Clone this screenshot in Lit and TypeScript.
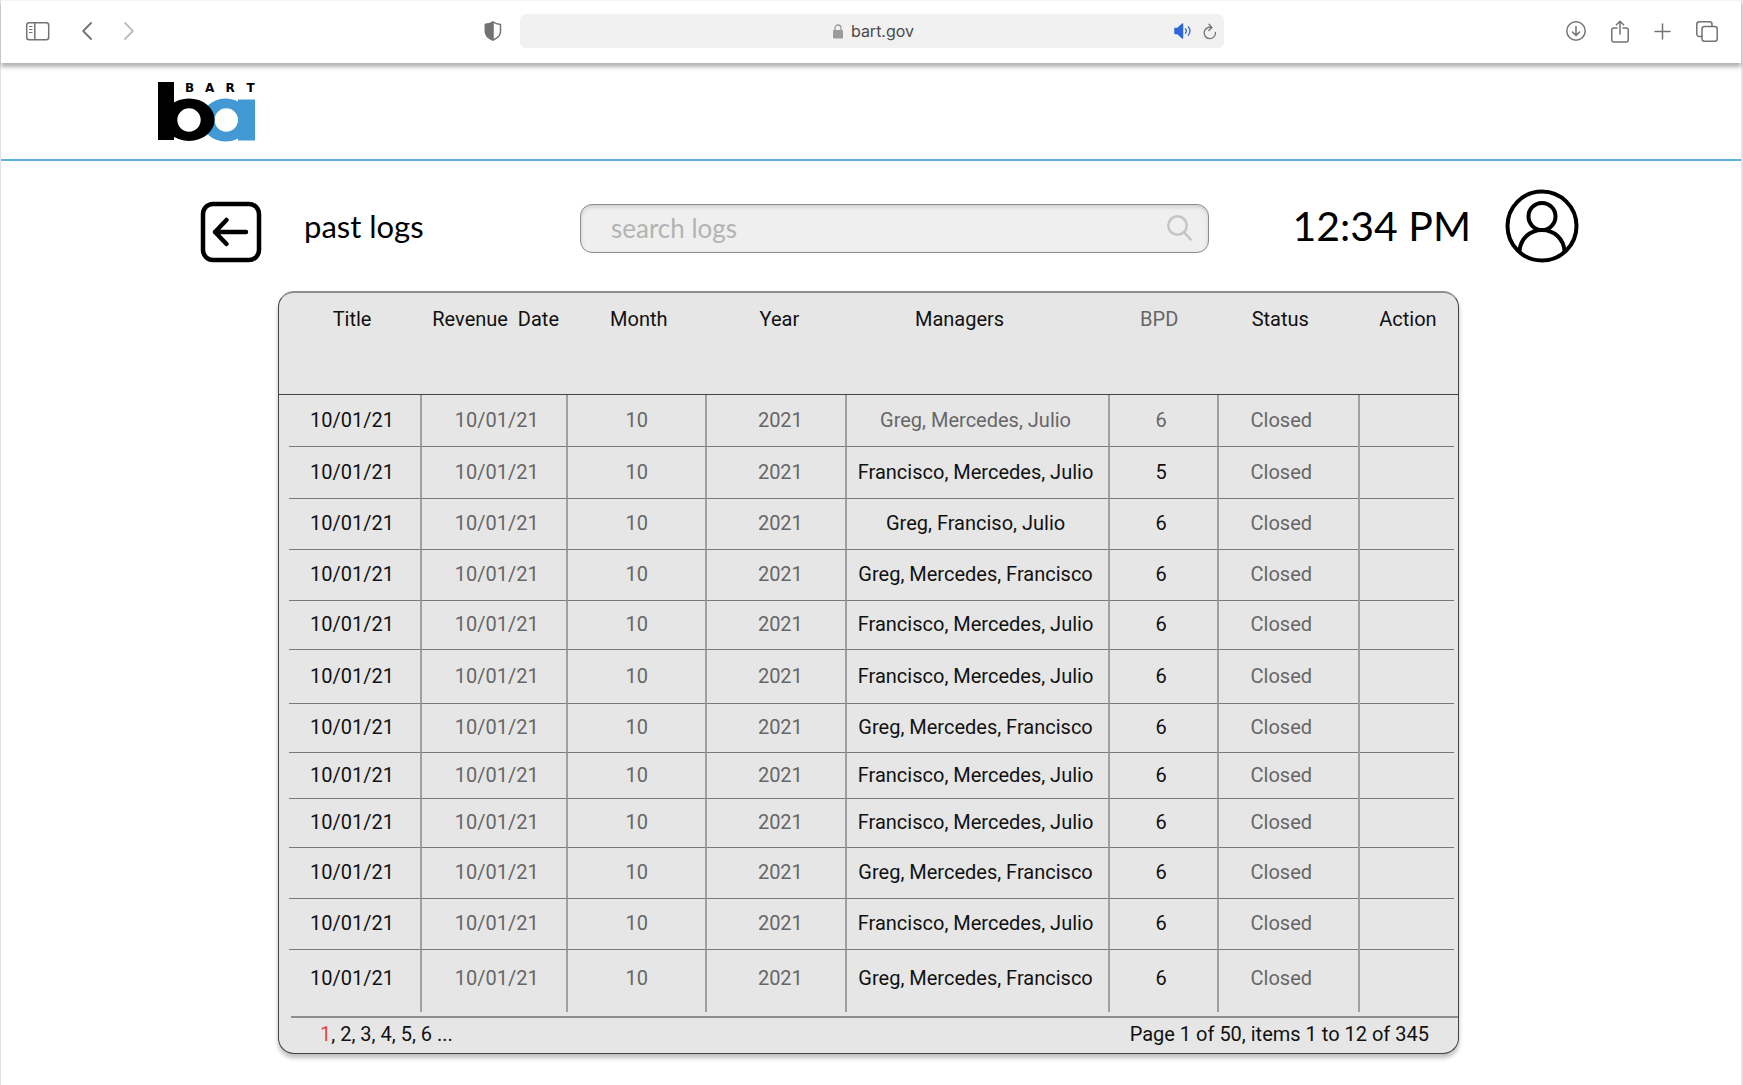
import { LitElement, html, css, svg } from "lit";
import { customElement } from "lit/decorators.js";
import { classMap } from "lit/directives/class-map.js";

interface LogRow {
  managers: string;
  bpd: number;
  muted?: boolean;
}

const FMJ = "Francisco, Mercedes, Julio";
const GMF = "Greg, Mercedes, Francisco";

const ROWS: LogRow[] = [
  { managers: "Greg, Mercedes, Julio", bpd: 6, muted: true },
  { managers: FMJ, bpd: 5 },
  { managers: "Greg, Franciso, Julio", bpd: 6 },
  { managers: GMF, bpd: 6 },
  { managers: FMJ, bpd: 6 },
  { managers: FMJ, bpd: 6 },
  { managers: GMF, bpd: 6 },
  { managers: FMJ, bpd: 6 },
  { managers: FMJ, bpd: 6 },
  { managers: GMF, bpd: 6 },
  { managers: FMJ, bpd: 6 },
  { managers: GMF, bpd: 6 },
];

const icon = (w: number, h: number, body: unknown) => html`<svg
  width=${w}
  height=${h}
  viewBox="0 0 ${w} ${h}"
  fill="none"
  stroke="currentColor"
  stroke-width="1.5"
  stroke-linecap="round"
  stroke-linejoin="round"
  aria-hidden="true"
>${body}</svg>`;

@customElement("browser-bar")
export class BrowserBar extends LitElement {
  static styles = css`
    :host {
      display: grid;
      grid-template-columns: 1fr 704px 1fr;
      align-items: center;
      height: 63px;
      box-sizing: border-box;
      padding: 0 23px 2px 24px;
      background: #fff;
      border-top: 1px solid #f4f4f4;
      box-shadow: 0 4px 4px rgba(0, 0, 0, 0.3);
      position: relative;
      font-family: Inter, "Liberation Sans", sans-serif;
      color: #737373;
    }
    button {
      display: flex;
      padding: 0;
      border: 0;
      background: none;
      color: inherit;
    }
    .group {
      display: flex;
      align-items: center;
    }
    .left {
      gap: 32px;
    }
    .right {
      justify-content: flex-end;
      gap: 25px;
    }
    .faded {
      color: #bdbdbd;
    }
    .shield {
      margin-left: auto;
      margin-right: 18px;
    }
    .address {
      display: flex;
      align-items: center;
      height: 34px;
      border-radius: 6px;
      background: #f1f1f1;
      padding: 0 7px;
      gap: 11px;
    }
    .site {
      flex: 1;
      display: flex;
      justify-content: center;
      align-items: center;
      gap: 8px;
      padding-left: 58px;
      font-size: 16px;
      color: #4a4a4a;
    }
    .sound {
      color: #2f66da;
    }
  `;

  render() {
    return html`
      <div class="group left">
        <button aria-label="Sidebar">
          ${icon(25, 20, svg`<rect x="1.7" y="1.7" width="22" height="17" rx="2.5"/><path d="M9.8 2v16.500"/><path d="M4.500 5.500h2.500M4.500 8.500h2.500M4.500 11.500h2.500" stroke-width="1.200"/>`)}
        </button>
        <button aria-label="Back">${icon(10, 18, svg`<path d="M9 1 1.200 9 9 17" stroke-width="1.800"/>`)}</button>
        <button class="faded" aria-label="Forward">${icon(10, 18, svg`<path d="M1 1 8.800 9 1 17" stroke-width="1.800"/>`)}</button>
        <button class="shield" aria-label="Privacy report">
          ${icon(18, 20, svg`<path d="M9 1C7 2.400 4 3.200 1.500 3.400V11c0 3.500 3 6 7.500 8 4.500-2 7.500-4.500 7.500-8V3.400C14 3.200 11 2.400 9 1Z"/><path d="M9 1C7 2.400 4 3.200 1.500 3.400V11c0 3.500 3 6 7.500 8Z" fill="currentColor"/>`)}
        </button>
      </div>
      <div class="address">
        <div class="site">
          <svg width="10" height="15" viewBox="0 0 10 15" aria-hidden="true">
            <rect y="6" width="10" height="8.500" rx="1.200" fill="#9b9b9b" />
            <path d="M2 7V4a3 3 0 0 1 6 0v3" fill="none" stroke="#9b9b9b" stroke-width="1.300" />
          </svg>
          <span>bart.gov</span>
        </div>
        <button class="sound" aria-label="Mute">
          ${icon(18, 16, svg`<path d="M1 5.500h2.500L8.500 1v14L3.500 10.500H1Z" fill="currentColor"/><path d="M11.500 5.800c1 1.300 1 3.100 0 4.400M14.300 3.800c2 2.500 2 5.900 0 8.400" stroke-width="1.300"/>`)}
        </button>
        <button aria-label="Reload">
          ${icon(14, 17, svg`<path d="M12.500 9.500A5.700 5.700 0 1 1 8.500 4.500" stroke-width="1.300"/><path d="M6 1.300 9 4.600 5.800 7.500" stroke-width="1.300"/>`)}
        </button>
      </div>
      <div class="group right">
        <button aria-label="Downloads">
          ${icon(20, 20, svg`<circle cx="10" cy="10" r="9.200"/><path d="M10 5.500v9M6.500 11l3.500 3.600 3.500-3.600"/>`)}
        </button>
        <button aria-label="Share">
          ${icon(18, 23, svg`<path d="M6 8H2.800A2 2 0 0 0 .8 10v10a2 2 0 0 0 2 2h12.400a2 2 0 0 0 2-2V10a2 2 0 0 0-2-2H12"/><path d="M9 14V1.200M5.400 4.800 9 1.200l3.600 3.600"/>`)}
        </button>
        <button aria-label="New tab">${icon(17, 17, svg`<path d="M8.500 1v15M1 8.500h15"/>`)}</button>
        <button aria-label="Tabs">
          ${icon(22, 21, svg`<rect x="6" y="5.500" width="15.200" height="14.700" rx="2.500"/><path d="M6 15.500H3.300a2.500 2.500 0 0 1-2.500-2.500V3.300A2.500 2.500 0 0 1 3.300.8h10.200A2.500 2.500 0 0 1 16 3.300v2"/>`)}
        </button>
      </div>
    `;
  }
}

@customElement("site-header")
export class SiteHeader extends LitElement {
  static styles = css`
    :host {
      display: block;
      padding: 16px 156px 17px;
      border-bottom: 2px solid #5db0dc;
    }
    a {
      display: block;
      width: 98px;
    }
    svg {
      display: block;
    }
    text {
      font: bold 12px "DejaVu Sans", sans-serif;
    }
  `;

  render() {
    return html`
      <a href="#" aria-label="BART home">
        <svg width="98" height="63" viewBox="0 0 98 63">
          <g fill="#4399d4">
            <path fill-rule="evenodd" d="M68 19.500a23 21.500 0 0 0 0 43q8 0 14-3.500V23q-6-3.500-14-3.500ZM69.300 29.300a11.700 11.700 0 1 1 0 23.400 11.700 11.700 0 0 1 0-23.400Z" />
            <rect x="81" y="20.500" width="17" height="41" />
          </g>
          <rect x="1" y="3" width="16" height="58" />
          <path fill-rule="evenodd" d="M32 19.500a25.600 21.200 0 0 1 0 42.400 25.600 21.200 0 0 1 0-42.400ZM32 29.300a11.700 11.700 0 1 0 0 23.400 11.700 11.700 0 0 0 0-23.400Z" />
          <text x="28 48 68.500 89.500" y="13">BART</text>
        </svg>
      </a>
    `;
  }
}

@customElement("log-toolbar")
export class LogToolbar extends LitElement {
  static styles = css`
    :host {
      display: flex;
      align-items: center;
      padding: 28px 162px 0 199px;
      font-family: Lato, "Open Sans", sans-serif;
      color: #000;
    }
    button {
      display: flex;
      padding: 0;
      border: 0;
      background: none;
      color: inherit;
    }
    svg {
      display: block;
    }
    .back {
      margin-top: 12px;
    }
    h1 {
      flex: 0 0 276px;
      margin: 0 0 0 42px;
      font-size: 31px;
      line-height: 36px;
      font-weight: 400;
    }
    .search {
      flex: 1;
      display: flex;
      align-items: center;
      box-sizing: border-box;
      height: 49px;
      margin-top: 4px;
      padding: 0 16px 0 30px;
      border: 1px solid #8c8c8c;
      border-radius: 12px;
      background: #efefef;
      box-shadow: inset 0 2px 4px rgba(0, 0, 0, 0.14);
      color: #c4c4c4;
    }
    input {
      flex: 1;
      min-width: 0;
      padding: 0;
      border: 0;
      outline: 0;
      background: none;
      font: inherit;
      font-size: 26px;
    }
    input::placeholder {
      color: #b3b3b3;
      opacity: 1;
    }
    time {
      margin: 0 34px 0 83px;
      font-size: 41px;
      line-height: 48px;
    }
  `;

  render() {
    return html`
      <button class="back" aria-label="Back">
        <svg width="62" height="62" viewBox="0 0 62 62" fill="none" stroke="currentColor" stroke-linecap="round" stroke-linejoin="round">
          <rect x="3" y="3" width="56" height="56" rx="10" stroke-width="4.500" />
          <path d="M46 31H15M26.500 19 15 31l11.500 12" stroke-width="4.500" />
        </svg>
      </button>
      <h1>past logs</h1>
      <label class="search">
        <input type="search" placeholder="search logs" aria-label="search logs" />
        <svg width="25" height="26" viewBox="0 0 25 26" fill="none" stroke="currentColor" stroke-width="2.500" stroke-linecap="round">
          <circle cx="10.500" cy="10.500" r="9.200" />
          <path d="M17.200 17.500 23.600 24.500" />
        </svg>
      </label>
      <time>12:34 PM</time>
      <button aria-label="Profile">
        <svg width="74" height="74" viewBox="0 0 74 74" fill="none" stroke="currentColor" stroke-width="4">
          <circle cx="37" cy="37" r="34.500" />
          <circle cx="37" cy="27.500" r="13.500" />
          <path d="M14.500 62.500C15 50 25 41 37 41s22 9 22.500 21.500" />
        </svg>
      </button>
    `;
  }
}

@customElement("log-table")
export class LogTable extends LitElement {
  static styles = css`
    :host {
      display: block;
      margin: 28px 282px 0 277px;
      box-sizing: border-box;
      border: 1px solid #444;
      border-top: 2px solid #8e8e8e;
      border-radius: 16px;
      background: #e6e6e6;
      box-shadow: 0 4px 4px rgba(0, 0, 0, 0.25);
      font: 20px/24px Roboto, "Liberation Sans", sans-serif;
      color: #111;
    }
    table {
      width: 100%;
      table-layout: fixed;
      border-collapse: separate;
      border-spacing: 0;
    }
    .c-title { width: 141px; }
    .c-date { width: 146px; }
    .c-month { width: 139px; }
    .c-year { width: 140px; }
    .c-managers { width: 262px; }
    .c-bpd { width: 109px; }
    .c-status { width: 141px; }
    .c-action { width: 100px; }
    th,
    td {
      box-sizing: border-box;
      padding: 0;
      font-weight: 400;
      text-align: center;
      white-space: nowrap;
    }
    th {
      height: 102px;
      padding-top: 14px;
      vertical-align: top;
      border-bottom: 1px solid #444;
      white-space: pre;
    }
    td {
      height: 51px;
      padding-bottom: 2px;
      border-bottom: 1px solid #7a7a7a;
      border-left: 2px solid #a0a0a0;
    }
    td:first-child {
      padding-bottom: 3px;
      border-left: 0;
      border-bottom: 0;
      background: linear-gradient(#7a7a7a, #7a7a7a) 10px 100% / 100% 1px no-repeat;
    }
    td:last-child {
      border-bottom: 0;
      background: linear-gradient(#7a7a7a, #7a7a7a) -4px 100% / 100% 1px no-repeat;
    }
    tr:nth-child(-n + 2) td {
      height: 52px;
    }
    tr:nth-child(5) td,
    tr:nth-child(7) td,
    tr:nth-child(9) td {
      height: 49px;
    }
    tr:nth-child(6) td {
      height: 54px;
    }
    tr:nth-child(8) td {
      height: 46px;
    }
    tr:last-child td {
      height: 62px;
      padding-bottom: 6px;
      border-bottom: 0;
      background: none;
    }
    .muted {
      color: #666;
    }
    .title,
    .date {
      padding-left: 5px;
    }
    th.month {
      padding-left: 6px;
    }
    .year {
      padding-left: 8px;
    }
    th.managers {
      padding-right: 34px;
    }
    td.managers,
    td.bpd {
      padding-right: 4px;
    }
    th.bpd {
      padding-right: 6px;
    }
    .status {
      padding-right: 14px;
    }
    .footer {
      display: flex;
      justify-content: space-between;
      margin: 4px 0 0 12px;
      padding: 4px 29px 7px;
      border-top: 2px solid #8e8e8e;
    }
    nav a {
      color: inherit;
      text-decoration: none;
    }
    nav a.current {
      color: #e0483e;
    }
  `;

  render() {
    const pages = [1, 2, 3, 4, 5, 6];
    return html`
      <table>
        <colgroup>
          <col class="c-title" /><col class="c-date" /><col class="c-month" /><col class="c-year" />
          <col class="c-managers" /><col class="c-bpd" /><col class="c-status" /><col class="c-action" />
        </colgroup>
        <thead>
          <tr>
            <th class="title" scope="col">Title</th>
            <th class="date" scope="col">Revenue  Date</th>
            <th class="month" scope="col">Month</th>
            <th class="year" scope="col">Year</th>
            <th class="managers" scope="col">Managers</th>
            <th class="muted bpd" scope="col">BPD</th>
            <th class="status" scope="col">Status</th>
            <th scope="col">Action</th>
          </tr>
        </thead>
        <tbody>
          ${ROWS.map(
            (r) => html`<tr>
              <td class="title">10/01/21</td>
              <td class="muted date">10/01/21</td>
              <td class="muted">10</td>
              <td class="muted year">2021</td>
              <td class=${classMap({ managers: true, muted: !!r.muted })}>${r.managers}</td>
              <td class=${classMap({ bpd: true, muted: !!r.muted })}>${r.bpd}</td>
              <td class="muted status">Closed</td>
              <td></td>
            </tr>`
          )}
        </tbody>
      </table>
      <div class="footer">
        <nav aria-label="Pages">${pages.map((p, i) => html`${i ? ", " : ""}<a href="#" class=${classMap({ current: p === 1 })}>${p}</a>`)} ...</nav>
        <span>Page 1 of 50, items 1 to 12 of 345</span>
      </div>
    `;
  }
}

@customElement("app-root")
export class AppRoot extends LitElement {
  static styles = css`
    :host {
      display: block;
      box-sizing: border-box;
      min-height: 100vh;
      background: #fff;
      border-left: 1px solid #e3e3e3;
      border-right: 2px solid #e3e3e3;
    }
  `;

  render() {
    return html`
      <browser-bar></browser-bar>
      <site-header></site-header>
      <main>
        <log-toolbar></log-toolbar>
        <log-table></log-table>
      </main>
    `;
  }
}
